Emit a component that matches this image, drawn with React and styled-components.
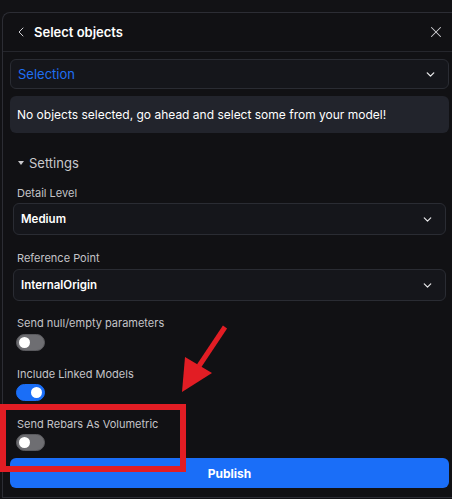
import React from 'react';
import styled, { createGlobalStyle } from 'styled-components';
import { ChevronDown, ChevronLeft, X } from 'lucide-react';

const GlobalStyle = createGlobalStyle`
  html, body {
    margin: 0;
    padding: 0;
    background: #121215;
    font-family: Inter, "Noto Sans", sans-serif;
    color: #fff;
  }
`;

const Page = styled.div`
  position: relative;
  width: 452px;
  height: 499px;
  overflow: hidden;
  background: #121215;
  padding-top: 12px;
  box-sizing: border-box;
`;

const Panel = styled.div`
  margin-left: 2px;
  height: 486px;
  box-sizing: border-box;
  background: #111114;
  border-left: 1px solid #2c2d34;
  border-top: 1px solid #2c2d34;
  border-bottom: 1px solid #2c2d34;
  border-top-left-radius: 8px;
  display: flex;
  flex-direction: column;
`;

const Header = styled.div`
  height: 38px;
  display: flex;
  align-items: center;
  padding: 0 7px 0 10px;
  border-bottom: 1px solid #25262c;
  gap: 5px;

  h1 {
    margin: 0;
    font-size: 13px;
    font-weight: 600;
    color: #fff;
    flex: 1;
  }

  svg {
    color: #d0d0d4;
  }
`;

const Body = styled.div`
  display: flex;
  flex-direction: column;
  padding: 7px 3px 0 7px;
`;

const SelectBox = styled.div`
  box-sizing: border-box;
  display: flex;
  align-items: center;
  justify-content: space-between;
  padding: 0 11px 0 ${(p) => (p.$wide ? '7px' : '7px')};
  margin: ${(p) => (p.$wide ? '0' : '0 3px')};
  height: ${(p) => (p.$wide ? '30px' : '32px')};
  border: 1px solid #2a2c33;
  border-radius: 6px;
  background: #15161b;
  font-size: ${(p) => (p.$wide ? '13px' : '11.5px')};
  font-weight: ${(p) => (p.$wide ? 400 : 600)};
  color: ${(p) => p.$color || '#fff'};

  svg {
    color: #e8e8ea;
  }
`;

const Notice = styled.div`
  margin-top: 7px;
  height: 37px;
  display: flex;
  align-items: center;
  padding: 0 7px;
  background: #22242c;
  border-radius: 6px;
  font-size: 12px;
  color: #fff;
`;

const SectionToggle = styled.div`
  margin-top: 21px;
  display: flex;
  align-items: center;
  gap: 5px;
  padding-left: 8px;
  font-size: 13px;
  color: #c9c9cd;
  height: 18px;
`;

const Caret = styled.span`
  width: 0;
  height: 0;
  border-left: 3.5px solid transparent;
  border-right: 3.5px solid transparent;
  border-top: 4px solid #c9c9cd;
`;

const Field = styled.div`
  display: flex;
  flex-direction: column;
  margin-top: ${(p) => p.$top || '0'};
`;

const Label = styled.div`
  font-size: 11px;
  color: #c4c4c8;
  padding-left: 7px;
  height: 16px;
  line-height: 16px;
  margin-bottom: ${(p) => p.$gap || '4px'};
`;

const Toggle = styled.div`
  margin-left: 6px;
  width: 29px;
  height: 17px;
  border-radius: 9px;
  background: ${(p) => (p.$on ? '#1a6ef7' : '#6e6e72')};
  border: 1px solid ${(p) => (p.$on ? '#1a6ef7' : '#5a5a5e')};
  box-sizing: border-box;
  position: relative;

  &::after {
    content: '';
    position: absolute;
    top: 2px;
    left: ${(p) => (p.$on ? '14px' : '2px')};
    width: 11px;
    height: 11px;
    border-radius: 50%;
    background: #fff;
  }
`;

const PublishButton = styled.button`
  margin-top: 7px;
  height: 30px;
  border: none;
  border-radius: 6px;
  background: #1a6ef8;
  color: #fff;
  font-family: Inter, "Noto Sans", sans-serif;
  font-size: 12px;
  font-weight: 700;
`;

const Annotation = styled.svg`
  position: absolute;
  left: 0;
  top: 0;
  pointer-events: none;
`;

export default function App() {
  return (
    <>
      <GlobalStyle />
      <Page>
        <Panel>
          <Header>
            <ChevronLeft size={16} strokeWidth={1.5} />
            <h1>Select objects</h1>
            <X size={18} strokeWidth={1.4} />
          </Header>
          <Body>
            <SelectBox $wide $color="#1f6ff2">
              Selection
              <ChevronDown size={13} strokeWidth={2.5} />
            </SelectBox>
            <Notice>No objects selected, go ahead and select some from your model!</Notice>

            <SectionToggle>
              <Caret />
              Settings
            </SectionToggle>

            <Field $top="13px">
              <Label $gap="2px">Detail Level</Label>
              <SelectBox>
                Medium
                <ChevronDown size={13} strokeWidth={2.2} />
              </SelectBox>
            </Field>

            <Field $top="15px">
              <Label $gap="3px">Reference Point</Label>
              <SelectBox>
                InternalOrigin
                <ChevronDown size={13} strokeWidth={2.2} />
              </SelectBox>
            </Field>

            <Field $top="14px">
              <Label $gap="3px">Send null/empty parameters</Label>
              <Toggle />
            </Field>

            <Field $top="15px">
              <Label $gap="2px">Include Linked Models</Label>
              <Toggle $on />
            </Field>

            <Field $top="15px">
              <Label $gap="2px">Send Rebars As Volumetric</Label>
              <Toggle />
            </Field>

            <PublishButton>Publish</PublishButton>
          </Body>
        </Panel>

        <Annotation width="452" height="499" viewBox="0 0 452 499">
          <rect x="3" y="407" width="180" height="62" fill="none" stroke="#e21d24" strokeWidth="6" />
          <line x1="225" y1="327" x2="199" y2="366" stroke="#e21d24" strokeWidth="5" />
          <polygon points="182,392 185,357 212,373" fill="#e21d24" />
        </Annotation>
      </Page>
    </>
  );
}
